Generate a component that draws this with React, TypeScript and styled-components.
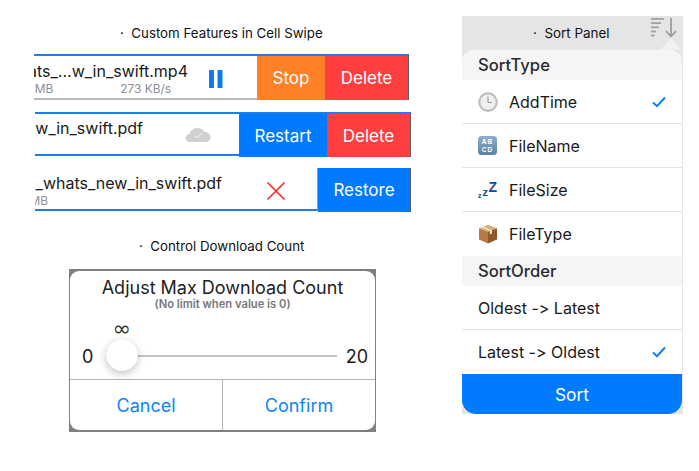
import React from 'react';
import styled, { createGlobalStyle } from 'styled-components';

const Global = createGlobalStyle`
  html, body {
    margin: 0;
    padding: 0;
    background: #fff;
    font-family: Inter, "Liberation Sans", sans-serif;
    font-feature-settings: "calt" 0, "liga" 0;
    color: #1c1c1e;
  }
  * { box-sizing: border-box; }
`;

const Page = styled.div`
  display: flex;
  align-items: flex-start;
  width: 699px;
  height: 471px;
  overflow: hidden;
`;

const LeftColumn = styled.div`
  width: 376px;
  margin-left: 34px;
  padding-top: 24px;
`;

const Heading = styled.div<{ $bottom: number; $left: number }>`
  height: 18px;
  line-height: 18px;
  font-size: 13.3px;
  color: #111;
  white-space: pre;
  margin-bottom: ${(p) => p.$bottom}px;
  padding-left: ${(p) => p.$left}px;
`;

const Row = styled.div<{ $height: number; $bottom: number; $left: number; $width: number; $noTop?: boolean }>`
  display: flex;
  width: ${(p) => p.$width}px;
  height: ${(p) => p.$height}px;
  margin-left: ${(p) => p.$left}px;
  margin-bottom: ${(p) => p.$bottom}px;
  border-top: ${(p) => (p.$noTop ? 'none' : '2px solid #1a7fe6')};
  border-right: 1px solid #5c6068;
  overflow: hidden;
`;

const Main = styled.div<{ $line: string; $lineBottom: number; $divider?: boolean }>`
  flex: 1;
  min-width: 0;
  display: flex;
  border-bottom: 2px solid ${(p) => p.$line};
  margin-bottom: ${(p) => p.$lineBottom}px;
  border-right: ${(p) => (p.$divider ? '1px solid #6aa5e0' : 'none')};
`;

const Info = styled.div<{ $width: number; $top: number }>`
  width: ${(p) => p.$width}px;
  padding-top: ${(p) => p.$top}px;
  flex-shrink: 0;
  overflow: hidden;
  display: flex;
  flex-direction: column;
  align-items: flex-end;
`;

const FileName = styled.div`
  font-size: 16px;
  line-height: 20px;
  white-space: nowrap;
  color: #1a1a1a;
`;

const SubLine = styled.div<{ $gap: number; $right: number }>`
  display: flex;
  gap: ${(p) => p.$gap}px;
  padding-right: ${(p) => p.$right}px;
  margin-top: 1px;
  font-size: 11.9px;
  line-height: 14px;
  color: #8e8e93;
  white-space: nowrap;
`;

const IconSlot = styled.div<{ $left: number; $top: number }>`
  margin-left: ${(p) => p.$left}px;
  margin-top: ${(p) => p.$top}px;
  display: flex;
`;

const Action = styled.div<{ $width: number; $color: string }>`
  width: ${(p) => p.$width}px;
  flex-shrink: 0;
  display: flex;
  align-items: center;
  justify-content: center;
  background: ${(p) => p.$color};
  color: #fff;
  font-size: 17px;
`;

const Dialog = styled.div`
  width: 307px;
  height: 163px;
  margin-left: 35px;
  background: #808080;
  padding: 2px 1px;
`;

const DialogCard = styled.div`
  height: 159px;
  background: #fff;
  border-radius: 9px;
  display: flex;
  flex-direction: column;
`;

const DialogTitle = styled.div`
  margin-top: 6px;
  text-align: center;
  font-size: 18px;
  line-height: 22px;
  color: #222;
`;

const DialogHint = styled.div`
  text-align: center;
  font-size: 11.2px;
  font-weight: 600;
  line-height: 11px;
  color: #77777c;
`;

const InfinityMark = styled.div`
  margin: 9px 0 0 35px;
  width: 34px;
  text-align: center;
  font-family: "DejaVu Sans", sans-serif;
  font-size: 22px;
  line-height: 20px;
  color: #333;
`;

const SliderRow = styled.div`
  display: flex;
  align-items: center;
  height: 32px;
  margin-top: 1px;
  margin-bottom: 7px;
  padding: 0 7px 0 12px;
  font-size: 18px;
  color: #1a1a1a;
`;

const Track = styled.div`
  position: relative;
  flex: 1;
  height: 2px;
  margin: 0 9px 0 22px;
  background: #c4c4c6;
`;

const Knob = styled.div`
  position: absolute;
  left: -9px;
  top: -16px;
  width: 32px;
  height: 32px;
  border-radius: 50%;
  background: #fff;
  box-shadow: 0 3px 8px rgba(0, 0, 0, 0.22), 0 0 1px rgba(0, 0, 0, 0.15);
`;

const DialogButtons = styled.div`
  flex: 1;
  display: flex;
  border-top: 1px solid #b4b4b6;
`;

const DialogButton = styled.div<{ $divider?: boolean }>`
  flex: ${(p) => (p.$divider ? '0 0 153px' : '1')};
  display: flex;
  align-items: center;
  justify-content: center;
  font-size: 18px;
  color: #0a84ff;
  border-right: ${(p) => (p.$divider ? '1px solid #b4b4b6' : 'none')};
`;

const Panel = styled.div`
  width: 221px;
  height: 398px;
  margin-left: 52px;
  margin-top: 16px;
  background: #e5e5e6;
  display: flex;
  flex-direction: column;
`;

const PanelHeader = styled.div`
  position: relative;
  height: 34px;
  flex-shrink: 0;
  display: flex;
  align-items: center;
  padding-left: 71px;
  font-size: 13.4px;
  color: #111;
  white-space: pre;
`;

const SortGlyph = styled.svg`
  position: absolute;
  left: 187px;
  top: 0;
`;

const Sheet = styled.div`
  width: 220px;
  flex: 1;
  background: #fff;
  border-radius: 12px 12px 14px 14px;
  display: flex;
  flex-direction: column;
  overflow: hidden;
`;

const SectionTitle = styled.div`
  height: 30px;
  flex-shrink: 0;
  display: flex;
  align-items: center;
  padding-left: 16px;
  background: #f5f5f5;
  font-size: 16.6px;
  font-weight: 500;
  color: #2a2a2c;
`;

const Option = styled.div<{ $last?: boolean }>`
  height: 44px;
  flex-shrink: 0;
  display: flex;
  align-items: center;
  padding: 0 16px;
  font-size: 16px;
  color: #1a1a1a;
  border-bottom: ${(p) => (p.$last ? 'none' : '1px solid #e2e2e4')};
`;

const OptionIcon = styled.div`
  width: 31px;
  flex-shrink: 0;
  display: flex;
  align-items: center;
`;

const OptionLabel = styled.div`
  flex: 1;
`;

const SortButton = styled.div`
  flex: 1;
  display: flex;
  align-items: center;
  justify-content: center;
  background: #007aff;
  color: #fff;
  font-size: 17.4px;
`;

const Check = () => (
  <svg width="14" height="12" viewBox="0 0 14 12">
    <path d="M1 6.5 L5 10.2 L13 1.5" fill="none" stroke="#0a7cf5" strokeWidth="1.9" />
  </svg>
);

const Pause = () => (
  <svg width="14" height="18" viewBox="0 0 14 18">
    <rect x="0" y="0" width="5" height="18" rx="0.6" fill="#0a7cf0" />
    <rect x="8.5" y="0" width="5" height="18" rx="0.6" fill="#0a7cf0" />
  </svg>
);

const Cloud = () => (
  <svg width="26" height="16" viewBox="0 0 26 18" preserveAspectRatio="none">
    <path
      d="M6 17 C2.5 17 0.5 14.8 0.5 12.2 C0.5 9.8 2.2 8 4.6 7.6 C5.4 3.6 8.6 1 12.4 1 C15.6 1 18.2 2.8 19.4 5.6 C23 5.6 25.5 8.4 25.5 11.6 C25.5 14.8 23 17 20 17 Z"
      fill="#d0d0d2"
    />
    <path d="M9.5 10 L12 12.4 L16.8 7.2" fill="none" stroke="#fff" strokeWidth="1" />
  </svg>
);

const Cross = () => (
  <svg width="20" height="20" viewBox="0 0 20 20">
    <path d="M1.5 1.5 L18.5 18.5 M18.5 1.5 L1.5 18.5" stroke="#ff2d2d" strokeWidth="1.7" />
  </svg>
);

const ClockEmoji = () => (
  <svg width="20" height="20" viewBox="0 0 20 20">
    <circle cx="10" cy="10" r="9.4" fill="#c4c4c6" stroke="#a8a8aa" strokeWidth="0.6" />
    <circle cx="10" cy="10" r="7.6" fill="#f0f0f0" />
    <path d="M10 4.5 V10.5 H14" fill="none" stroke="#8a8a8e" strokeWidth="0.9" />
  </svg>
);

const AbcdEmoji = () => (
  <svg width="19" height="19" viewBox="0 0 19 19">
    <defs>
      <linearGradient id="abcdFill" x1="0" y1="0" x2="0" y2="1">
        <stop offset="0" stopColor="#8fb0cc" />
        <stop offset="1" stopColor="#5d829f" />
      </linearGradient>
    </defs>
    <rect x="0" y="0" width="19" height="19" rx="3.5" fill="url(#abcdFill)" />
    <text x="9.5" y="8.4" textAnchor="middle" fontSize="6.6" fontWeight="700" fontFamily="Liberation Sans" fill="#fff" letterSpacing="1">AB</text>
    <text x="9.5" y="15.6" textAnchor="middle" fontSize="6.6" fontWeight="700" fontFamily="Liberation Sans" fill="#fff" letterSpacing="1">CD</text>
  </svg>
);

const ZzzEmoji = () => (
  <svg width="20" height="18" viewBox="0 0 20 18">
    <g fontFamily="Liberation Sans" fontWeight="700" fill="#0f49ad">
      <text x="0" y="17" fontSize="7">z</text>
      <text x="4.5" y="15" fontSize="11">z</text>
      <text x="10.5" y="11" fontSize="14">Z</text>
    </g>
  </svg>
);

const BoxEmoji = () => (
  <svg width="20" height="20" viewBox="0 0 20 20">
    <path d="M10 0.8 L19 4.2 L10 7.8 L1 4.2 Z" fill="#d9ab78" />
    <path d="M1 4.2 L10 7.8 V19.4 L1 15.6 Z" fill="#b57a45" />
    <path d="M19 4.2 L10 7.8 V19.4 L19 15.6 Z" fill="#91592b" />
    <path d="M5.2 2.6 L14 6.2 V9.6 L11.8 10.4 V7 L3.4 3.4 Z" fill="#efe2cd" />
  </svg>
);

export default function App() {
  return (
    <>
      <Global />
      <Page>
        <LeftColumn>
          <Heading $bottom={12} $left={86}>{'·  Custom Features in Cell Swipe'}</Heading>
          <Row $width={375} $height={46} $bottom={12} $left={0}>
            <Main $line="#b9b9bb" $lineBottom={0}>
              <Info $width={154} $top={5}>
                <FileName>202_whats_...w_in_swift.mp4</FileName>
                <SubLine $gap={67} $right={17}>
                  <span>20.1 MB</span>
                  <span>273 KB/s</span>
                </SubLine>
              </Info>
              <IconSlot $left={21} $top={14}><Pause /></IconSlot>
            </Main>
            <Action $width={68} $color="#ff8026">Stop</Action>
            <Action $width={83} $color="#ff3f3f">Delete</Action>
          </Row>
          <Row $width={376} $height={45} $bottom={11} $left={1}>
            <Main $line="#1a7fe6" $lineBottom={1}>
              <Info $width={108} $top={4}>
                <FileName>202_whats_new_in_swift.pdf</FileName>
              </Info>
              <IconSlot $left={42} $top={13}><Cloud /></IconSlot>
            </Main>
            <Action $width={88} $color="#007aff">Restart</Action>
            <Action $width={83} $color="#ff3f3f">Delete</Action>
          </Row>
          <Row $width={376} $height={44} $bottom={25} $left={1} $noTop>
            <Main $line="#1a7fe6" $lineBottom={1} $divider>
              <Info $width={187} $top={5}>
                <FileName>202_whats_new_in_swift.pdf</FileName>
                <SubLine $gap={0} $right={174}>
                  <span>8.2 MB</span>
                </SubLine>
              </Info>
              <IconSlot $left={44} $top={13}><Cross /></IconSlot>
            </Main>
            <Action $width={92} $color="#007aff">Restore</Action>
          </Row>
          <Heading $bottom={14} $left={105}>{'·  Control Download Count'}</Heading>
          <Dialog>
            <DialogCard>
              <DialogTitle>Adjust Max Download Count</DialogTitle>
              <DialogHint>(No limit when value is 0)</DialogHint>
              <InfinityMark>∞</InfinityMark>
              <SliderRow>
                <span>0</span>
                <Track><Knob /></Track>
                <span>20</span>
              </SliderRow>
              <DialogButtons>
                <DialogButton $divider>Cancel</DialogButton>
                <DialogButton>Confirm</DialogButton>
              </DialogButtons>
            </DialogCard>
          </Dialog>
        </LeftColumn>
        <Panel>
          <PanelHeader>
            {'·  Sort Panel'}
            <SortGlyph width="34" height="34" viewBox="0 0 34 34">
              <g fill="#a2a2a4">
                <rect x="2" y="2" width="13" height="1.8" />
                <rect x="2" y="6.2" width="10" height="1.8" />
                <rect x="2" y="10.4" width="8" height="1.8" />
                <rect x="2" y="14.6" width="5" height="1.8" />
                <rect x="2" y="18.6" width="3.5" height="1.8" />
              </g>
              <path d="M22 2 V20 M17 15 L22 20.5 L27 15" fill="none" stroke="#9a9a9c" strokeWidth="1.7" />
              <path d="M11 34 L22 22 L33 34 Z" fill="#f1f1f2" />
            </SortGlyph>
          </PanelHeader>
          <Sheet>
            <SectionTitle>SortType</SectionTitle>
            <Option>
              <OptionIcon><ClockEmoji /></OptionIcon>
              <OptionLabel>AddTime</OptionLabel>
              <Check />
            </Option>
            <Option>
              <OptionIcon><AbcdEmoji /></OptionIcon>
              <OptionLabel>FileName</OptionLabel>
            </Option>
            <Option>
              <OptionIcon><ZzzEmoji /></OptionIcon>
              <OptionLabel>FileSize</OptionLabel>
            </Option>
            <Option $last>
              <OptionIcon><BoxEmoji /></OptionIcon>
              <OptionLabel>FileType</OptionLabel>
            </Option>
            <SectionTitle>SortOrder</SectionTitle>
            <Option>
              <OptionLabel>Oldest -&gt; Latest</OptionLabel>
            </Option>
            <Option $last>
              <OptionLabel>Latest -&gt; Oldest</OptionLabel>
              <Check />
            </Option>
            <SortButton>Sort</SortButton>
          </Sheet>
        </Panel>
      </Page>
    </>
  );
}
